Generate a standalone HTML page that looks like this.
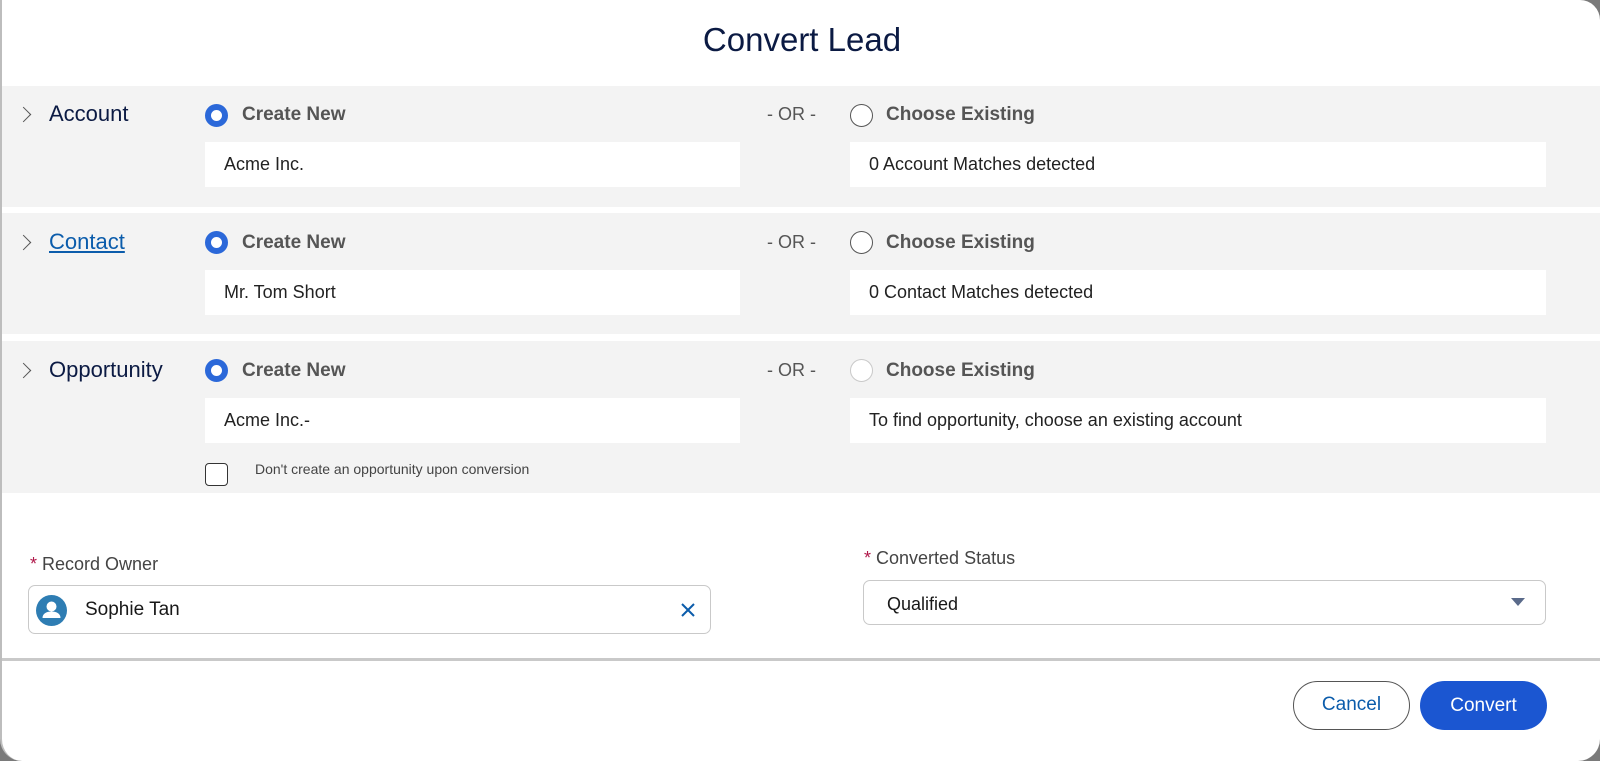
<!DOCTYPE html>
<html><head><style>
*{box-sizing:border-box;margin:0;padding:0}
body{width:1600px;height:761px;background:#7a7a7a;font-family:"Liberation Sans",sans-serif;overflow:hidden;position:relative}
.modal{position:absolute;left:0;top:0;width:1600px;height:761px;background:#fff;border-radius:0 20px 22px 22px;border-left:2px solid #bdbdbd;overflow:hidden}
.title{position:absolute;top:21px;left:0;width:1600px;text-align:center;font-size:33px;color:#0b1a43}
.sec{position:absolute;left:0;width:1600px;background:#f3f3f3}
.abs{position:absolute}
.chev{position:absolute;left:16px;width:11px;height:11px;border-right:1.6px solid #555;border-top:1.6px solid #555;transform:rotate(45deg)}
.lbl{position:absolute;left:47px;font-size:22px;color:#0b1a43}
.rad{position:absolute;width:23px;height:23px;border-radius:50%;background:#fff;border:1.5px solid #555}
.rad.on{border:6px solid #2b68d9}
.rad.dis{border-color:#c9c9c9}
.rt{position:absolute;font-size:19px;font-weight:bold;color:#555}
.or{position:absolute;left:765px;font-size:18px;color:#555}
.box{position:absolute;background:#fff;height:45px;font-size:18px;color:#222;padding-left:19px;line-height:45px}
</style></head><body>
<div class="modal">
<div class="title">Convert Lead</div>

<div class="sec" style="top:86px;height:121px">
<div class="chev" style="top:23px"></div><div class="lbl" style="top:15px">Account</div>
<div class="rad on" style="left:203px;top:18px"></div><div class="rt" style="left:240px;top:18px">Create New</div>
<div class="or" style="top:18px">- OR -</div>
<div class="rad" style="left:848px;top:18px"></div><div class="rt" style="left:884px;top:18px">Choose Existing</div>
<div class="box" style="left:203px;top:56px;width:535px">Acme Inc.</div>
<div class="box" style="left:848px;top:56px;width:696px">0 Account Matches detected</div>
</div>

<div class="sec" style="top:213px;height:121px">
<div class="chev" style="top:24px"></div><div class="lbl" style="top:16px;color:#0b5cab;text-decoration:underline">Contact</div>
<div class="rad on" style="left:203px;top:18px"></div><div class="rt" style="left:240px;top:19px">Create New</div>
<div class="or" style="top:19px">- OR -</div>
<div class="rad" style="left:848px;top:18px"></div><div class="rt" style="left:884px;top:19px">Choose Existing</div>
<div class="box" style="left:203px;top:57px;width:535px">Mr. Tom Short</div>
<div class="box" style="left:848px;top:57px;width:696px">0 Contact Matches detected</div>
</div>

<div class="sec" style="top:341px;height:152px">
<div class="chev" style="top:24px"></div><div class="lbl" style="top:16px">Opportunity</div>
<div class="rad on" style="left:203px;top:18px"></div><div class="rt" style="left:240px;top:19px">Create New</div>
<div class="or" style="top:19px">- OR -</div>
<div class="rad dis" style="left:848px;top:18px"></div><div class="rt" style="left:884px;top:19px">Choose Existing</div>
<div class="box" style="left:203px;top:57px;width:535px">Acme Inc.-</div>
<div class="box" style="left:848px;top:57px;width:696px">To find opportunity, choose an existing account</div>
<div class="abs" style="left:203px;top:122px;width:23px;height:23px;border:1.5px solid #333;border-radius:4px;background:#fff"></div>
<div class="abs" style="left:253px;top:120px;font-size:14px;color:#444">Don't create an opportunity upon conversion</div>
</div>

<div class="abs" style="left:28px;top:554px;font-size:18px;color:#444"><span style="color:#b0184a">*</span> Record Owner</div>
<div class="abs" style="left:26px;top:585px;width:683px;height:49px;border:1.5px solid #c9c9c9;border-radius:7px;background:#fff">
<svg class="abs" style="left:7px;top:9px" width="31" height="31" viewBox="0 0 31 31"><circle cx="15.5" cy="15.5" r="15.5" fill="#2e7db3"/><circle cx="15.5" cy="11.5" r="5" fill="#fff"/><path d="M6.5 23c0-4.5 4-6.5 9-6.5s9 2 9 6.5z" fill="#fff"/></svg>
<div class="abs" style="left:56px;top:13px;font-size:19px;color:#181818">Sophie Tan</div>
<svg class="abs" style="left:651px;top:16px" width="16" height="16" viewBox="0 0 16 16"><path d="M2 2L14 14M14 2L2 14" stroke="#0b5cab" stroke-width="2"/></svg>
</div>

<div class="abs" style="left:862px;top:548px;font-size:18px;color:#444"><span style="color:#b0184a">*</span> Converted Status</div>
<div class="abs" style="left:861px;top:580px;width:683px;height:45px;border:1.5px solid #c9c9c9;border-radius:7px;background:#fff">
<div class="abs" style="left:23px;top:13px;font-size:18px;color:#181818">Qualified</div>
<svg class="abs" style="left:647px;top:17px" width="14" height="9" viewBox="0 0 14 9"><path d="M0 0H14L7 8z" fill="#5a6a8a"/></svg>
</div>

<div class="abs" style="left:0;top:658px;width:1600px;height:3px;background:#c9c9c9"></div>
<div class="abs" style="left:1291px;top:681px;width:117px;height:49px;border:1.5px solid #555;border-radius:25px;text-align:center;line-height:46px;font-size:19px;color:#0b5cab">Cancel</div>
<div class="abs" style="left:1418px;top:681px;width:127px;height:49px;background:#1b56d1;border-radius:25px;text-align:center;line-height:49px;font-size:19px;color:#fff">Convert</div>
</div>
</body></html>
